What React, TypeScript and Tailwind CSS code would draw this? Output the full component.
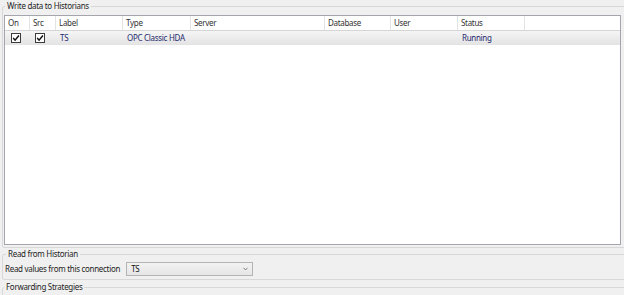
import React from "react";

const cols = [
  { name: "On", cls: "w-[25px]" },
  { name: "Src", cls: "w-[26px]" },
  { name: "Label", cls: "w-[67px]" },
  { name: "Type", cls: "w-[68px]" },
  { name: "Server", cls: "w-[134px]" },
  { name: "Database", cls: "w-[66px]" },
  { name: "User", cls: "w-[67px]" },
  { name: "Status", cls: "w-[67px]" },
];

function Check() {
  return (
    <svg width="10" height="10" viewBox="0 0 10 10">
      <rect x="0.5" y="0.5" width="9" height="9" fill="#fdfdfd" stroke="#3c3c3c" />
      <path d="M2.2 5 L4.1 7.2 L7.9 2.6" stroke="#111" strokeWidth="1.5" fill="none" />
    </svg>
  );
}

export default function App() {
  return (
    <div
      className="w-[624px] h-[295px] overflow-hidden bg-[#f0f0f0] text-[8px] leading-[12px] tracking-[-0.3px] text-[#1e1e1e]"
      style={{ fontFamily: '"Noto Sans", "Open Sans", sans-serif' }}
    >
      {/* Write data to Historians */}
      <fieldset className="ml-[2px] w-[630px] border border-[#d8d8d8] rounded-[2px] pl-[1px] pb-[2px] pt-[3px]">
        <legend className="ml-[1px] px-[2px]">Write data to Historians</legend>
        <div className="w-[617px] h-[230px] border border-[#a5a5ad] bg-white flex flex-col">
          <div className="flex h-[15px] border-b border-[#d5d5d5] bg-white">
            {cols.map((c) => (
              <div key={c.name} className={`${c.cls} shrink-0 border-r border-[#e3e3e3] pl-[3px] flex items-center text-[#333]`}>
                {c.name}
              </div>
            ))}
          </div>
          <div className="flex h-[14px] bg-gradient-to-b from-[#f5f5f5] to-[#e3e3e3] text-[#262b6e]">
            <div className="w-[25px] shrink-0 flex items-center pl-[6px]">
              <Check />
            </div>
            <div className="w-[26px] shrink-0 flex items-center pl-[5px]">
              <Check />
            </div>
            <div className="w-[67px] shrink-0 pl-[4px] flex items-center">TS</div>
            <div className="w-[68px] shrink-0 pl-[4px] flex items-center">OPC Classic HDA</div>
            <div className="w-[134px] shrink-0" />
            <div className="w-[66px] shrink-0" />
            <div className="w-[67px] shrink-0" />
            <div className="w-[67px] shrink-0 pl-[4px] flex items-center">Running</div>
          </div>
        </div>
      </fieldset>

      {/* Read from Historian */}
      <fieldset className="ml-[2px] w-[630px] border border-[#d8d8d8] rounded-[2px] pl-[2px] pb-[3px] pt-[2px]">
        <legend className="ml-[1px] px-[2px]">Read from Historian</legend>
        <div className="flex items-center gap-[6px]">
          <span>Read values from this connection</span>
          <div className="w-[127px] h-[14px] border border-[#b4b4b4] bg-gradient-to-b from-[#f2f2f2] to-[#e6e6e6] flex items-center justify-between pl-[4px] pr-[4px]">
            <span className="text-[#111]">TS</span>
            <svg width="5" height="4" viewBox="0 0 5 4">
              <path d="M0.5 0.8 L2.5 3 L4.5 0.8" stroke="#777" strokeWidth="0.9" fill="none" />
            </svg>
          </div>
        </div>
      </fieldset>

      {/* Forwarding Strategies */}
      <fieldset className="ml-[2px] w-[630px] h-[40px] border border-[#d8d8d8] rounded-[2px] mt-[1px]">
        <legend className="ml-[1px] px-[2px]">Forwarding Strategies</legend>
      </fieldset>
    </div>
  );
}
